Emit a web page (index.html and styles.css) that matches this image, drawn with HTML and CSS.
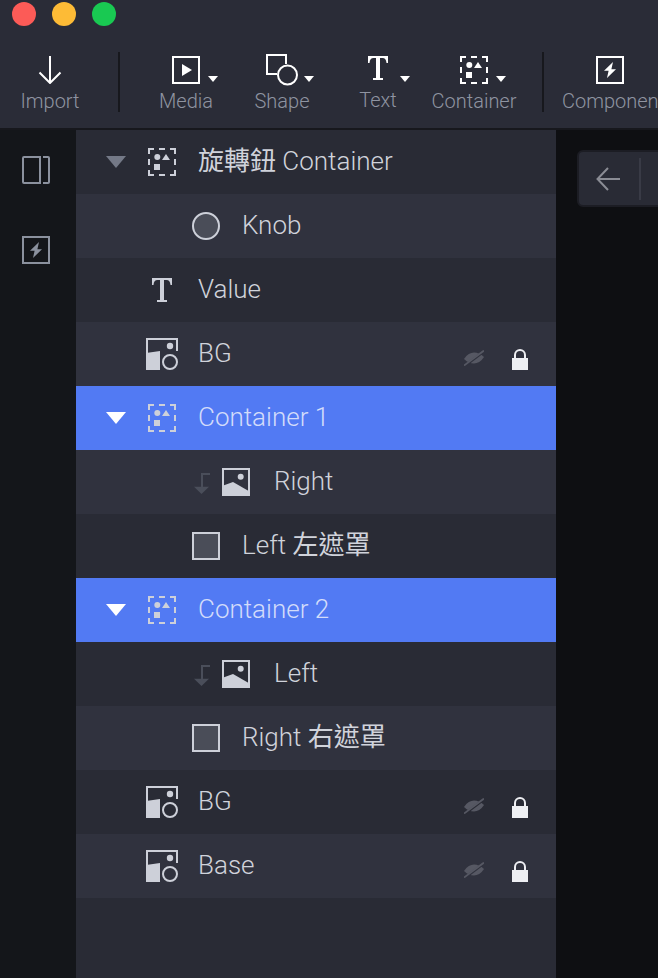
FILE: index.html
```html
<!DOCTYPE html>
<html lang="zh-Hant">
<head>
<meta charset="utf-8">
<title>Layers</title>
<link rel="stylesheet" href="styles.css">
</head>
<body>
<svg class="defs" width="0" height="0" aria-hidden="true">
  <defs>
    <symbol id="i-container" viewBox="0 0 28 28">
      <path d="M1 6V1H6M11 1H17M22 1H27V6M27 11V17M27 22V27H22M17 27H11M6 27H1V22M1 17V11" fill="none" stroke="currentColor" stroke-width="2"/>
      <circle cx="9.300" cy="9" r="3" fill="currentColor"/>
      <path d="M14 12L18 6L22 12Z" fill="currentColor"/>
      <rect x="6" y="16" width="6" height="6" fill="currentColor"/>
    </symbol>
    <symbol id="i-mixed" viewBox="0 0 32 32">
      <path d="M1 31V1H31V13" fill="none" stroke="currentColor" stroke-width="2"/>
      <path d="M0 32V15L14 13V32Z" fill="currentColor"/>
      <circle cx="24" cy="8" r="3.200" fill="currentColor"/>
      <circle cx="24" cy="24" r="7" fill="none" stroke="currentColor" stroke-width="2"/>
    </symbol>
    <symbol id="i-image" viewBox="0 0 28 28">
      <rect x="1" y="1" width="26" height="26" fill="none" stroke="currentColor" stroke-width="2"/>
      <circle cx="18.700" cy="8.700" r="3" fill="currentColor"/>
      <path d="M0 28V18L11 14L28 23.700V28Z" fill="currentColor"/>
    </symbol>
    <symbol id="i-link" viewBox="0 0 16 21">
      <path d="M16 1H8V15" fill="none" stroke="currentColor" stroke-width="2"/>
      <path d="M0 13.700H15L7.500 21Z" fill="currentColor"/>
    </symbol>
    <symbol id="i-eye" viewBox="0 0 20 16">
      <path d="M0 9C3 4.500 6.500 2.500 10 2.500S17 4 20 7C17 11.500 13.500 13.500 10 13.500S3 12 0 9Z" fill="currentColor"/>
      <path class="eye-gap" d="M0 16.500L20 1.500" stroke-width="2.500"/>
      <path d="M0 15.500L20 .5" stroke="currentColor" stroke-width="1.800"/>
    </symbol>
    <symbol id="i-lock" viewBox="0 0 16 22">
      <path d="M3 11V7a5 5 0 0 1 10 0V11" fill="none" stroke="currentColor" stroke-width="2"/>
      <rect x="0" y="10" width="16" height="12" fill="currentColor"/>
    </symbol>
    <symbol id="i-bolt" viewBox="0 0 28 28">
      <rect x="1" y="1" width="26" height="26" fill="none" stroke="currentColor" stroke-width="2"/>
      <path d="M17 6L8 14.800H12.600L11 22L20 13.200H15.400Z" fill="currentColor"/>
    </symbol>
    <symbol id="i-t" viewBox="0 0 20 24">
      <path d="M0 7V0H20V7H18.500C18.200 3.500 17 2 14.500 2H12V22H15V24H5V22H8V2H5.500C3 2 1.800 3.500 1.500 7Z" fill="currentColor"/>
    </symbol>
  </defs>
</svg>

<div class="app">
  <header class="topbar">
    <div class="lights">
      <span class="light light-red"></span>
      <span class="light light-amber"></span>
      <span class="light light-green"></span>
    </div>
    <div class="tools">
      <div class="tool tool-import">
        <svg width="24" height="28" viewBox="0 0 24 28"><path d="M12 0V27M1.500 16.500L12 27L22.500 16.500" fill="none" stroke="#fff" stroke-width="2"/></svg>
        <span>Import</span>
      </div>
      <i class="sep sep-first"></i>
      <div class="tool">
        <div class="tool-art">
          <svg width="28" height="28" viewBox="0 0 28 28"><rect x="1" y="1" width="26" height="26" fill="none" stroke="#fff" stroke-width="2"/><path d="M10 8L20 14L10 20Z" fill="#fff"/></svg>
          <b class="caret"></b>
        </div>
        <span>Media</span>
      </div>
      <div class="tool">
        <div class="tool-art">
          <svg class="shape-icon" width="32" height="32" viewBox="0 0 32 32"><path d="M11 20H1V1H20V10" fill="none" stroke="#fff" stroke-width="2"/><circle cx="21.500" cy="21" r="9.500" fill="none" stroke="#fff" stroke-width="2"/></svg>
          <b class="caret"></b>
        </div>
        <span>Shape</span>
      </div>
      <div class="tool">
        <div class="tool-art">
          <svg class="t-tool"><use href="#i-t"/></svg>
          <b class="caret"></b>
        </div>
        <span>Text</span>
      </div>
      <div class="tool">
        <div class="tool-art">
          <svg class="ic-28 ic-white"><use href="#i-container"/></svg>
          <b class="caret"></b>
        </div>
        <span>Container</span>
      </div>
      <i class="sep sep-second"></i>
      <div class="tool tool-component">
        <svg class="ic-28 ic-white"><use href="#i-bolt"/></svg>
        <span>Component</span>
      </div>
    </div>
  </header>

  <main class="body">
    <nav class="rail">
      <svg class="rail-icon" width="28" height="28" viewBox="0 0 28 28"><path d="M18 1H2Q1 1 1 2V26Q1 27 2 27H18ZM21 1H26Q27 1 27 2V26Q27 27 26 27H21" fill="none" stroke="#8b919e" stroke-width="2"/></svg>
      <svg class="rail-icon rail-bolt" width="28" height="28"><use href="#i-bolt"/></svg>
    </nav>

    <section class="layers">
      <div class="row row-group">
        <b class="arrow arrow-dim"></b>
        <svg class="ic-28 ic-soft"><use href="#i-container"/></svg>
        <span class="label"><span class="cjk">旋轉鈕</span> Container</span>
      </div>
      <div class="row row-alt row-child">
        <i class="shape shape-round"></i>
        <span class="label">Knob</span>
      </div>
      <div class="row">
        <svg class="t-row"><use href="#i-t"/></svg>
        <span class="label">Value</span>
      </div>
      <div class="row row-alt">
        <svg class="ic-32 ic-soft"><use href="#i-mixed"/></svg>
        <span class="label">BG</span>
        <span class="row-end">
          <svg class="eye"><use href="#i-eye"/></svg>
          <svg class="lock"><use href="#i-lock"/></svg>
        </span>
      </div>
      <div class="row row-group row-sel">
        <b class="arrow"></b>
        <svg class="ic-28 ic-soft"><use href="#i-container"/></svg>
        <span class="label">Container 1</span>
      </div>
      <div class="row row-alt row-linked">
        <svg class="link"><use href="#i-link"/></svg>
        <svg class="ic-28 ic-soft"><use href="#i-image"/></svg>
        <span class="label">Right</span>
      </div>
      <div class="row row-child">
        <i class="shape"></i>
        <span class="label">Left <span class="cjk">左遮罩</span></span>
      </div>
      <div class="row row-group row-sel">
        <b class="arrow"></b>
        <svg class="ic-28 ic-soft"><use href="#i-container"/></svg>
        <span class="label">Container 2</span>
      </div>
      <div class="row row-linked">
        <svg class="link"><use href="#i-link"/></svg>
        <svg class="ic-28 ic-soft"><use href="#i-image"/></svg>
        <span class="label">Left</span>
      </div>
      <div class="row row-alt row-child">
        <i class="shape"></i>
        <span class="label">Right <span class="cjk">右遮罩</span></span>
      </div>
      <div class="row">
        <svg class="ic-32 ic-soft"><use href="#i-mixed"/></svg>
        <span class="label">BG</span>
        <span class="row-end">
          <svg class="eye"><use href="#i-eye"/></svg>
          <svg class="lock"><use href="#i-lock"/></svg>
        </span>
      </div>
      <div class="row row-alt">
        <svg class="ic-32 ic-soft"><use href="#i-mixed"/></svg>
        <span class="label">Base</span>
        <span class="row-end">
          <svg class="eye"><use href="#i-eye"/></svg>
          <svg class="lock"><use href="#i-lock"/></svg>
        </span>
      </div>
    </section>

    <section class="stage">
      <div class="nav-card">
        <svg width="24" height="24" viewBox="0 0 24 24"><path d="M24 12H1.500M12 1L1.500 12L12 23" fill="none" stroke="#8a8c94" stroke-width="2"/></svg>
        <i class="nav-sep"></i>
      </div>
    </section>
  </main>
</div>
</body>
</html>
```

FILE: styles.css
```css
* { box-sizing: border-box; }
html, body { margin: 0; height: 100%; overflow: hidden; background: #0e0f12; }
body { font-family: Roboto, "Noto Sans CJK TC", sans-serif; }
.defs { position: absolute; }
svg { display: block; flex: none; }

.app { width: 658px; height: 978px; display: flex; flex-direction: column; overflow: hidden; }

.topbar { height: 130px; flex: none; background: #2a2c37; border-bottom: 2px solid #17181d; }
.lights { display: flex; gap: 16px; padding: 2px 0 0 12px; height: 28px; }
.light { width: 24px; height: 24px; border-radius: 50%; }
.light-red { background: #fc5b57; }
.light-amber { background: #fdbb36; }
.light-green { background: #19c952; }

.tools { display: flex; align-items: flex-start; height: 100px; white-space: nowrap; }
.tool { width: 96px; flex: none; height: 84px; padding-top: 28px; display: flex; flex-direction: column; align-items: center; color: #8f94a1; font-size: 20px; font-weight: 300; line-height: 24px; }
.tool > span { margin-top: 5px; }
.tool-import { width: 100px; }
.tool-art { height: 28px; width: 28px; display: flex; position: relative; }
.caret { position: absolute; left: 36px; top: 20px; width: 0; height: 0; border: 5px solid transparent; border-top: 6px solid #fff; border-bottom: 0; }
.shape-icon { margin: -2px 0 0 -2px; }
.t-tool { width: 20px; height: 24px; margin-left: 4px; color: #fff; }
.t-row { width: 20px; height: 24px; margin: 0 6px; color: #cdd0d9; }
.sep { flex: none; width: 2px; height: 60px; margin-top: 24px; background: #17181d; }
.sep-first { margin-left: 18px; margin-right: 18px; }
.sep-second { margin-left: 20px; margin-right: 18px; }
.tool-component { width: auto; align-items: flex-start; }
.tool-component svg { margin-left: 34px; }

.ic-28 { width: 28px; height: 28px; }
.ic-32 { width: 32px; height: 32px; }
.ic-white { color: #fff; }
.ic-soft { color: #cdd0d9; }

.body { flex: 1; display: flex; min-height: 0; }
.rail { width: 76px; flex: none; background: #14161a; padding: 26px 0 0 22px; display: flex; flex-direction: column; gap: 52px; }
.rail-bolt { color: #8b919e; }

.layers { width: 480px; flex: none; background: #292b35; }
.row { --row-bg: #292b35; height: 64px; padding-left: 70px; display: flex; align-items: center; color: #d0d3db; position: relative; }
.row-alt { --row-bg: #30323e; background: #30323e; }
.row-group { padding-left: 72px; }
.row-sel { background: #527af3; color: #d3dcfa; }
.row-child { padding-left: 116px; }
.row-linked { padding-left: 118px; }
.label { font-size: 26px; font-weight: 300; line-height: 32px; margin: 0 0 2px 20px; white-space: nowrap; }
.cjk { font-weight: 400; }
.row-group .label { margin-left: 22px; }
.row-child .label { margin-left: 22px; }
.row-linked .label { margin-left: 24px; }

.arrow { position: absolute; left: 30px; top: 26px; width: 0; height: 0; border: 10px solid transparent; border-top: 12px solid #fff; border-bottom: 0; }
.arrow-dim { border-top-color: #747987; }

.shape { width: 28px; height: 28px; border: 2px solid #cdd0d9; background: #4a4d58; flex: none; }
.shape-round { border-radius: 50%; }
.link { width: 16px; height: 21px; margin: 3px 12px 0 0; color: #4a4e5a; }

.row-end { position: absolute; left: 388px; top: 26px; display: flex; align-items: flex-start; gap: 28px; }
.eye { width: 20px; height: 16px; margin-top: 2px; color: #565863; }
.eye-gap { stroke: var(--row-bg); }
.lock { width: 16px; height: 22px; color: #eeeff3; }

.stage { flex: 1; padding: 20px 0 0 21px; overflow: hidden; }
.nav-card { width: 120px; height: 57px; background: #292b35; border-radius: 6px; border: 2px solid #1c1d24; display: flex; align-items: center; padding-left: 17px; }
.nav-sep { width: 2px; height: 42px; background: #393b46; margin-left: 19px; }
```
